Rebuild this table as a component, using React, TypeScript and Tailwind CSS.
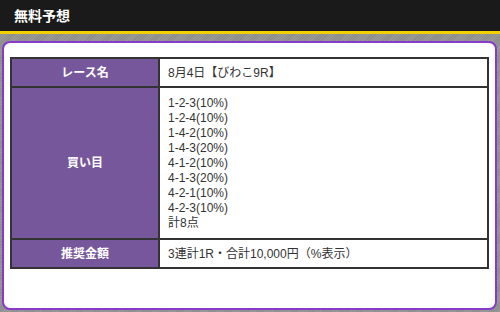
const picks = [
  "1-2-3(10%)",
  "1-2-4(10%)",
  "1-4-2(10%)",
  "1-4-3(20%)",
  "4-1-2(10%)",
  "4-1-3(20%)",
  "4-2-1(10%)",
  "4-2-3(10%)",
  "計8点",
];

const font = { fontFamily: '"Liberation Sans", "Noto Sans CJK JP", sans-serif' };

const Label = ({ children }: { children: React.ReactNode }) => (
  <div className="w-[146px] shrink-0 bg-[#77579b] flex items-center justify-center text-white font-bold text-[12px]">
    {children}
  </div>
);

export default function App() {
  return (
    <div
      style={font}
      className="w-[500px] h-[312px] overflow-hidden bg-[repeating-linear-gradient(135deg,#9a9a9a_0px,#9a9a9a_1px,#8c8c8c_1px,#8c8c8c_2px)]"
    >
      {/* title bar */}
      <header className="h-[34px] bg-[#1a1a1a] border-b-[3px] border-[#f2d000] flex items-center px-[14px]">
        <h1 className="text-white font-bold text-[14px] leading-none">無料予想</h1>
      </header>

      <div className="pt-[7px] pl-[2px] pr-[3px]">
        <div className="h-[269px] bg-white border-2 border-[#8a3acb] rounded-[8px] px-[6px] pt-[14px]">
          <div className="border-2 border-[#333]">
            <div className="flex h-[27px]">
              <Label>レース名</Label>
              <div className="flex-1 border-l-2 border-[#333] flex items-center pl-[8px] text-[12px] text-[#333]">
                8月4日【びわこ9R】
              </div>
            </div>
            <div className="flex border-t-2 border-[#333] h-[152px]">
              <Label>買い目</Label>
              <div className="flex-1 border-l-2 border-[#333] pl-[8px] pt-[8px] text-[12px] leading-[15px] text-[#333]">
                {picks.map((p) => (
                  <div key={p} className="h-[15px]">{p}</div>
                ))}
              </div>
            </div>
            <div className="flex border-t-2 border-[#333] h-[29px]">
              <Label>推奨金額</Label>
              <div className="flex-1 border-l-2 border-[#333] flex items-center pl-[8px] text-[12px] text-[#333]">
                3連計1R・合計10,000円（%表示）
              </div>
            </div>
          </div>
        </div>
      </div>
    </div>
  );
}
